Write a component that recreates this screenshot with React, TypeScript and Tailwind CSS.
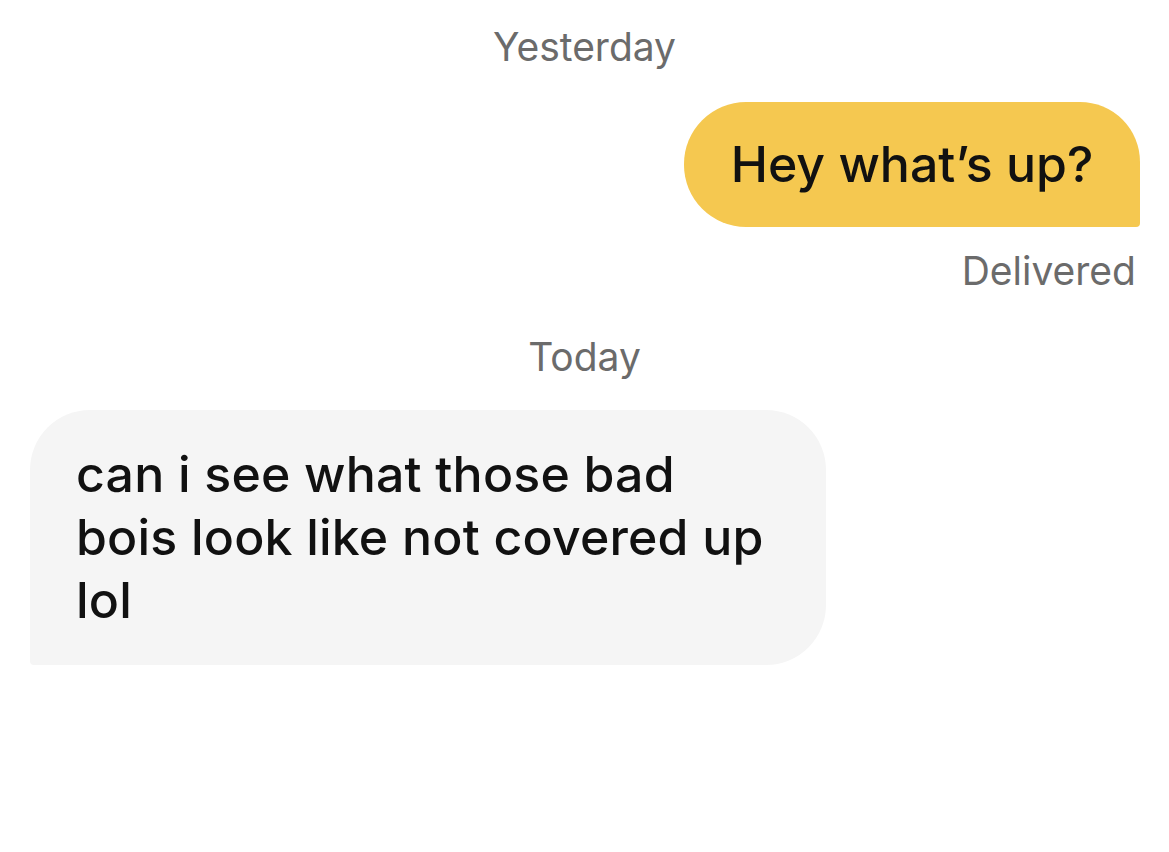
export default function App() {
  return (
    <div className="w-[1169px] h-[852px] bg-white flex flex-col font-['Inter',sans-serif] text-[#111]">
      {/* Yesterday */}
      <div className="pt-[23px] text-center text-[39px] leading-[48px] text-[#6b6b6b]">Yesterday</div>

      {/* Outgoing */}
      <div className="flex justify-end pr-[29px] mt-[31px]">
        <div className="bg-[#f5c850] w-[456px] h-[125px] flex items-center justify-center rounded-tl-[62px] rounded-bl-[62px] rounded-tr-[60px] rounded-br-[4px] text-[50px] font-medium">
          Hey what’s up?
        </div>
      </div>
      <div className="text-right pr-[33px] mt-[20px] text-[39px] leading-[48px] text-[#6b6b6b]">Delivered</div>

      {/* Today */}
      <div className="mt-[38px] text-center text-[39px] leading-[48px] text-[#6b6b6b]">Today</div>

      {/* Incoming */}
      <div className="flex justify-start pl-[30px] mt-[29px]">
        <div className="bg-[#f5f5f5] w-[796px] h-[255px] pl-[46px] pr-[10px] pt-[33px] rounded-tl-[60px] rounded-tr-[60px] rounded-br-[60px] rounded-bl-[4px] text-[50px] leading-[63px] font-medium tracking-[0.2px]">
          can i see what those bad<br />
          bois look like not covered up<br />
          lol
        </div>
      </div>
    </div>
  );
}
